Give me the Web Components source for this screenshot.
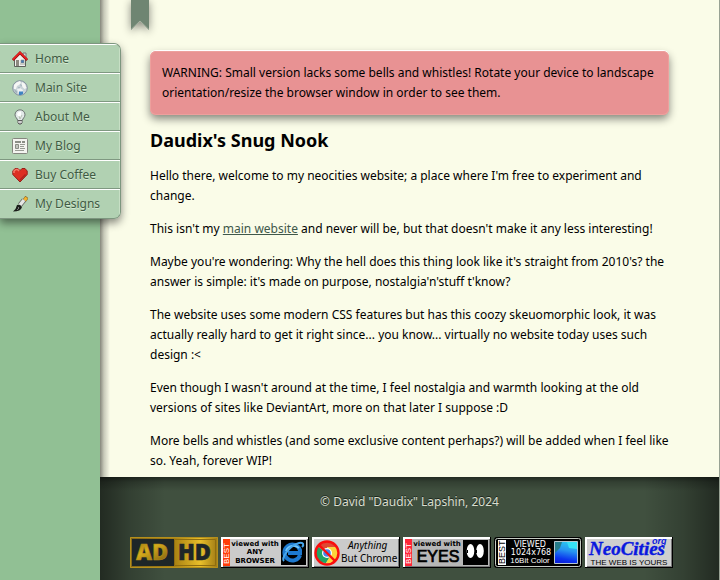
<!DOCTYPE html>
<html lang="en">
<head>
<meta charset="utf-8">
<title>Daudix's Snug Nook</title>
<style>
body{margin:0;min-height:100vh;font:12px/20px "Noto Sans",sans-serif;color:#000;background:#91c094}
nook-article a{color:#40584a}
</style>
</head>
<body>
<nook-page>
  <nook-menu slot="menu">
    <nook-link icon="home" href="#home">Home</nook-link>
    <nook-link icon="globe" href="#main">Main Site</nook-link>
    <nook-link icon="bulb" href="#about">About Me</nook-link>
    <nook-link icon="news" href="#blog">My Blog</nook-link>
    <nook-link icon="heart" href="#coffee">Buy Coffee</nook-link>
    <nook-link icon="brush" href="#designs">My Designs</nook-link>
  </nook-menu>
  <nook-article heading="Daudix's Snug Nook">
    <nook-warning slot="notice">WARNING: Small version lacks some bells and whistles! Rotate your device to landscape orientation/resize the browser window in order to see them.</nook-warning>
    <p>Hello there, welcome to my neocities website; a place where I'm free to experiment and change.</p>
    <p>This isn't my <a href="#main">main website</a> and never will be, but that doesn't make it any less interesting!</p>
    <p>Maybe you're wondering: Why the hell does this thing look like it's straight from 2010's? the answer is simple: it's made on purpose, nostalgia'n'stuff t'know?</p>
    <p>The website uses some modern CSS features but has this coozy skeuomorphic look, it was actually really hard to get it right since... you know... virtually no website today uses such design :&lt;</p>
    <p>Even though I wasn't around at the time, I feel nostalgia and warmth looking at the old versions of sites like DeviantArt, more on that later I suppose :D</p>
    <p>More bells and whistles (and some exclusive content perhaps?) will be added when I feel like so. Yeah, forever WIP!</p>
  </nook-article>
  <nook-footer slot="footer">
    <span>© David "Daudix" Lapshin, 2024</span>
    <nook-badge slot="badges" kind="adhd"></nook-badge>
    <nook-badge slot="badges" kind="browser"></nook-badge>
    <nook-badge slot="badges" kind="chrome"></nook-badge>
    <nook-badge slot="badges" kind="eyes"></nook-badge>
    <nook-badge slot="badges" kind="res"></nook-badge>
    <nook-badge slot="badges" kind="neo"></nook-badge>
  </nook-footer>
</nook-page>
<script>
const ICONS = {
  home: `<path d="M11 2h3v5h-3z" fill="#d8d8d4" stroke="#777"/><path d="M2.500 8 8 3l5.500 5v7.500h-11z" fill="#f1f1ee" stroke="#5d605a"/><path d="M4 9h3v6H4z" fill="#8c8a80"/><path d="M9 9h3v3H9z" fill="#4379b4" stroke="#8a8d87" stroke-width=".6"/><path d="M8 12h5v2H8z" fill="#c9cbc5"/><path d="M.8 9 8 1.800 15.200 9" fill="none" stroke="#9c1414" stroke-width="2.600"/><path d="M1 8.500 8 1.500l7 7" fill="none" stroke="#f02020" stroke-width="1.500"/>`,
  globe: `<circle cx="8" cy="8" r="7.300" fill="#c9d3d8" stroke="#8793a0"/><path d="M2 5q2-3 6-4l1 2-2 2-2 1-1 3-2 0zM10 2l3 2 1.500 4-2 1-2-2-1-3z" fill="#f6f7f5"/><path d="M5 9l3-1 3 2-1 4H7z" fill="#eef2f3"/><path d="M7 12l1-1 1 1 1-1 1 1 0 2-2 1H7z" fill="#3f83c2"/><path d="M2 9l3 2v3l-2-2zM8 4l2 1-1 2zM6 7l2 0-1 2z" fill="#a2b3bd"/>`,
  bulb: `<path d="M8 .8a5 5 0 0 0-5 5c0 2.300 2.300 3.500 2.700 5.700h4.600c.4-2.200 2.700-3.400 2.700-5.700A5 5 0 0 0 8 .8z" fill="#e2e9e8" stroke="#6b7270"/><path d="M5 5q1-3 4-2.500v3L8 9 6 7z" fill="#fff"/><path d="M7 7l1 3 2-4" fill="none" stroke="#b6c1b4"/><path d="M6 11.500h4V14l-1 1H7l-1-1z" fill="#aaa" stroke="#5a5a5a"/><path d="M6 13h4" stroke="#f4f4f4"/>`,
  news: `<rect x=".5" y=".5" width="15" height="15" rx="1" fill="#f4f4f0" stroke="#85867f"/><path d="M3 3h6v2H3zM10 3h3v2h-3z" fill="#8b8e86"/><path d="M8 6h5v1H8zM8 8h4v1H8zM8 10h5v1H8zM3 12h9v1H3z" fill="#989b93"/><path d="M3.500 6.500h3v4h-3z" fill="#c3c5bf" stroke="#8b8e86"/>`,
  heart: `<path d="M8 15 .8 7.500V4L3 1.500h3l2 2 2-2h3L15.200 4v3.500z" fill="#dd2f22" stroke="#93201a"/><path d="M2 6V4l2-1.500h1.500L7 4" fill="none" stroke="#f67a69" stroke-width="1.500"/><path d="m8 13 5.500-5.500" stroke="#ad231c" stroke-width="1.500"/>`,
  brush: `<path d="m15 1-3 4" stroke="#8a6a2a" stroke-width="4"/><path d="m14.500 1.500-2 3" stroke="#f5b32d" stroke-width="3"/><path d="m12 4-4 5" stroke="#676a65" stroke-width="5"/><path d="m12 4-4 5" stroke="#e6e7e4" stroke-width="3.400"/><path d="M5 9q3-1 5 2-1 4.500-9 4.500 3-2 4-6.500z" fill="#1b1e1a"/><path d="m6 11 1 1-2 2" stroke="#777" fill="none"/>`
};
const best = (box, fill, text, x, size) => `<path d="${box}" fill="${fill}"/><text transform="translate(${x} 27) rotate(-90)" font-family="Liberation Sans" font-size="${size}" fill="${text}">BEST</text>`;
const plate = c => `<path d="M0 0h88v31H0z" fill="#000"/><path d="M0 0h87v30H0z" fill="#fff"/><path d="M2 2h85v28H2z" fill="#777"/><path d="M2 2h84v27H2z" fill="${c}"/>`;
const BADGES = {
  adhd: ['ADHD', `<defs><linearGradient id="g" x2="1"><stop stop-color="#83661b"/><stop offset=".5" stop-color="#a88012"/><stop offset=".8" stop-color="#e9bf2a"/><stop offset="1" stop-color="#9d7814"/></linearGradient><linearGradient id="l" x2=".6" y2="1"><stop stop-color="#7d5d0b"/><stop offset=".5" stop-color="#d6ab1c"/><stop offset="1" stop-color="#896911"/></linearGradient></defs><path d="M0 0h88v31H0z" fill="url(#g)"/><path d="M.5.500h87v30H.5z" fill="none" stroke="#b48f1c"/><path d="M2 2h42v27H2z" fill="#1e2628"/><path d="M44.500 2.500h41v26h-41z" fill="none" stroke="#8f6d10"/><g font-family="Open Sans,sans-serif" font-weight="800" font-size="22"><text x="6" y="23" fill="url(#l)" stroke="#b48c18" stroke-width=".5">AD</text><text x="48" y="23" fill="#1e2628" stroke="#1e2628" stroke-width=".5">HD</text></g>`],
  browser: ['Viewed with any browser', plate('#cbcbcb') + best('M2 2h7v27H2z', '#ff3c08', '#fff', 8, 8) + `<g font-family="DejaVu Sans" font-weight="bold" font-size="7" text-anchor="middle"><text x="34" y="9">viewed with</text><text x="34" y="17">ANY</text><text x="34" y="26">BROWSER</text></g><path d="M60 3h25v25H60z"/><path d="M79 18a8 8 0 1 1 0-5v3H67" fill="none" stroke="#1d79cf" stroke-width="4"/><path d="M78 11a8 8 0 0 0-13 3" fill="none" stroke="#73c7fa" stroke-width="2"/><path d="M63 24c-3-3 6-16 15-18 5-1 5 2 3 4" fill="none" stroke="#47a6ec" stroke-width="2"/>`],
  chrome: ['Anything but Chrome', plate('#cbcbcb') + `<path d="M15 16 6 10a10 10 0 0 1 18 0H15z" fill="#df4934"/><path d="M15 16 6 10a10 10 0 0 0 8 16l5-8z" fill="#20a464"/><path d="M24 10a10 10 0 0 1-10 16l6-10-5-6z" fill="#fcd33b"/><circle cx="15" cy="16" r="5" fill="#fff"/><circle cx="15" cy="16" r="3.800" fill="#4286ee"/><circle cx="15" cy="16" r="11.500" fill="none" stroke="#fa0d0d" stroke-width="2.400"/><path d="m7 8 16 16" stroke="#fa0d0d" stroke-width="2.400"/><g font-family="Noto Sans" font-size="10"><text x="36" y="12" font-style="italic">Anything</text><text x="29" y="25">But Chrome</text></g>`],
  eyes: ['Viewed with eyes', plate('#b7b7b7') + best('M2 2h7v27H2z', '#ff2638', '#fff', 8, 8) + `<text x="34" y="9" font-family="DejaVu Sans" font-weight="bold" font-size="7" text-anchor="middle">viewed with</text><text x="35" y="25" font-family="Liberation Sans" font-size="16" stroke="#000" stroke-width=".7" text-anchor="middle">EYES</text><path d="M60 3h25v25H60z"/><ellipse cx="67.500" cy="14" rx="3.800" ry="7" fill="#fff"/><ellipse cx="77" cy="14" rx="3.800" ry="7" fill="#fff"/><path d="M64 13h1v3h-1zM73 13h1v3h-1z"/>`],
  res: ['Viewed 1024x768 16Bit Color', `<defs><linearGradient id="b" x1=".6" x2=".4" y2="1"><stop stop-color="#2bc8f0"/><stop offset=".4" stop-color="#2795f0"/><stop offset=".8" stop-color="#0b35ee"/><stop offset="1" stop-color="#0b20d8"/></linearGradient></defs><rect width="88" height="31" rx="3"/><rect x="1.500" y="1.500" width="85" height="28" rx="2" fill="none" stroke="#c5ccc4"/>` + best('M4 3h8v25H4z', '#fff', '#000', 11, 9) + `<g fill="#fff" font-family="DejaVu Sans" font-size="8" text-anchor="middle"><text x="36" y="10">VIEWED</text><text x="37" y="18">1024x768</text></g><text x="36" y="26" fill="#fff" font-family="Liberation Sans" font-size="8" text-anchor="middle">16Bit Color</text><path d="M60.500 4.500h23v22h-23z" fill="url(#b)" stroke="#b5c6ce"/><path d="M61 5h7l-2 6-5 5z" fill="#267b89"/><path d="M73 5h10v7l-8-1z" fill="#36e0f4"/>`],
  neo: ['NeoCities.org', plate('#cfcfcf') + `<g fill="#0918df"><text x="4" y="18" font-family="Liberation Serif" font-weight="bold" font-style="italic" font-size="19" stroke="#0918df" stroke-width=".4">NeoCities</text><text x="67" y="7" font-family="Liberation Sans" font-weight="bold" font-style="italic" font-size="9">org</text></g><text x="44" y="28" font-family="Liberation Sans" font-size="8" text-anchor="middle">THE WEB IS YOURS</text>`]
};
function define(name, html, setup) {
  customElements.define(name, class extends HTMLElement {
    connectedCallback() {
      if (this.shadowRoot) return;
      const t = document.createElement('template');
      t.innerHTML = html;
      const root = this.attachShadow({mode: 'open'});
      root.append(t.content);
      if (setup) setup(this, root);
    }
  });
}
define('nook-page', `<style>
:host{display:block;position:relative;min-height:100vh}
.sheet{display:flex;flex-direction:column;min-height:100vh;box-sizing:border-box;margin-left:100px;background:linear-gradient(90deg,#0007,#0003 4px,#0000 10px),#fafce8;border-right:1px solid #98a294}
main{flex:1}
.menu{position:absolute;top:43px;left:0;z-index:2}
.ribbon{position:absolute;left:131px;top:0;filter:drop-shadow(0 2px 4px #0007)}
.ribbon svg{display:block}
</style>
<div class="menu"><slot name="menu"></slot></div>
<div class="sheet"><main><slot></slot></main><slot name="footer"></slot></div>
<div class="ribbon"><svg width="18" height="30" viewBox="0 0 18 30" aria-hidden="true"><path d="M0 0h18v30l-9-9-9 9z" fill="#6f8572"/><path d="m0 29.500 9-8.500 9 8.500" fill="none" stroke="#a5b1a0"/></svg></div>`);
define('nook-menu', `<style>
:host{display:block}
nav{box-sizing:border-box;width:121px;padding-bottom:1px;border:1px solid #7d967f;border-left:0;border-radius:0 7px 7px 0;background:#b1d1b2;overflow:hidden}
.lift{border-radius:0 7px 7px 0;box-shadow:0 4px 8px #0007}
</style><div class="lift"><nav aria-label="Main"><slot></slot></nav></div>`);
define('nook-link', `<style>
:host{display:block}
:host(:not(:first-child)){border-top:1px solid #7f9881}
a{display:flex;align-items:center;gap:7px;height:27px;padding-left:12px;border-top:1px solid #fff;box-shadow:inset -1px 0 #c7dfc5;color:#405a43;text-decoration:none;text-shadow:0 1px #d4ead2}
svg{flex:none}
</style><a><svg width="16" height="16" viewBox="0 0 16 16" aria-hidden="true"></svg><span><slot></slot></span></a>`, (el, root) => {
  root.querySelector('a').href = el.getAttribute('href');
  root.querySelector('svg').innerHTML = ICONS[el.getAttribute('icon')];
});
define('nook-warning', `<style>
:host{display:block;padding:12px;border-radius:6px;background:#e89293;box-shadow:0 -1px #fff,0 4px 8px #0007,inset 0 0 0 1px #eda09d}
</style><slot></slot>`);
define('nook-article', `<style>
:host{display:block;padding:51px 50px 6px}
h1{font-size:18px;line-height:26px;margin:12px 0 13px}
::slotted(p){margin:0 0 13px}
::slotted(p:last-child){margin-bottom:0}
</style><slot name="notice"></slot><h1></h1><slot></slot>`, (el, root) => {
  root.querySelector('h1').textContent = el.getAttribute('heading');
});
define('nook-footer', `<style>
:host{display:block;background:linear-gradient(#0007,#0003 5px,#0000 14px),linear-gradient(90deg,#0007,#0003 30px,#0000 65px calc(100% - 75px),#0003 calc(100% - 35px),#0007),#40503f}
p{margin:0;padding:15px 0 25px;text-align:center;color:#d9decf;text-shadow:0 -1px #1c271d}
.row{display:flex;flex-wrap:wrap;gap:3px;padding:0 30px 12px}
</style><footer><p><slot></slot></p><div class="row"><slot name="badges"></slot></div></footer>`);
define('nook-badge', `<style>:host{display:block}svg{display:block}</style><a href="#badge"><svg width="88" height="31" viewBox="0 0 88 31"></svg></a>`, (el, root) => {
  const [label, art] = BADGES[el.getAttribute('kind')];
  root.querySelector('a').setAttribute('aria-label', label);
  root.querySelector('svg').innerHTML = art;
});
</script>
</body>
</html>
